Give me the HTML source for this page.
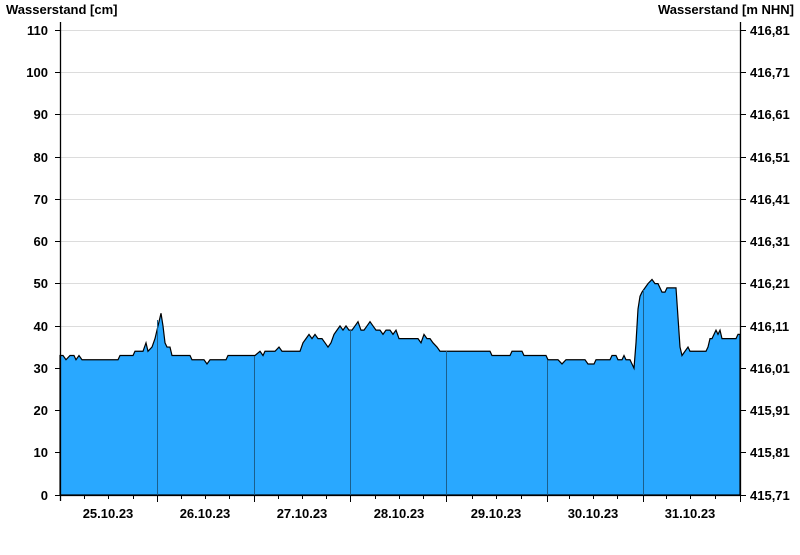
<!DOCTYPE html><html><head><style>body{margin:0;background:#fff;width:800px;height:550px;overflow:hidden}svg text{font-family:"Liberation Sans",Arial,sans-serif;font-weight:bold;font-size:13px;fill:#000}</style></head><body>
<svg width="800" height="550" viewBox="0 0 800 550">
<text x="6" y="14">Wasserstand [cm]</text>
<text x="794" y="14" text-anchor="end">Wasserstand [m NHN]</text>
<g stroke="#dcdcdc" stroke-width="1">
<line x1="60" x2="740" y1="30.5" y2="30.5"/><line x1="60" x2="740" y1="72.5" y2="72.5"/><line x1="60" x2="740" y1="114.5" y2="114.5"/><line x1="60" x2="740" y1="157.5" y2="157.5"/><line x1="60" x2="740" y1="199.5" y2="199.5"/><line x1="60" x2="740" y1="241.5" y2="241.5"/><line x1="60" x2="740" y1="283.5" y2="283.5"/><line x1="60" x2="740" y1="326.5" y2="326.5"/><line x1="60" x2="740" y1="368.5" y2="368.5"/><line x1="60" x2="740" y1="410.5" y2="410.5"/><line x1="60" x2="740" y1="452.5" y2="452.5"/>
</g>
<g transform="translate(0,495) scale(1,-4.227)">
<polygon fill="#29a8ff" stroke="#000" stroke-width="1.2" vector-effect="non-scaling-stroke" points="60,0 60,33 63,33 66,32 70,33 74,33 76,32 79,33 82,32 84,32 118,32 120,33 133,33 135,34 143,34 146,36 148,34 152,35 155,37 158,40 161,43 163,40 165,36 167,35 170,35 172,33 190,33 192,32 204,32 207,31 210,32 226,32 228,33 255,33 260,34 263,33 265,34 275,34 279,35 282,34 300,34 303,36 306,37 309,38 312,37 315,38 318,37 322,37 325,36 328,35 331,36 334,38 337,39 340,40 343,39 346,40 349,39 352,39 355,40 358,41 361,39 364,39 367,40 370,41 373,40 376,39 380,39 383,38 386,39 390,39 393,38 396,39 399,37 418,37 421,36 424,38 427,37 430,37 433,36 437,35 440,34 490,34 492,33 510,33 512,34 522,34 524,33 546,33 548,32 558,32 562,31 566,32 585,32 588,31 594,31 596,32 610,32 612,33 616,33 618,32 622,32 624,33 626,32 630,32 632,31 634,30 636,36 638,44 640,47 642,48 645,49 648,50 652,51 655,50 658,50 660,49 662,48 665,48 667,49 676,49 678,42 680,35 682,33 685,34 688,35 690,34 706,34 708,35 710,37 712,37 714,38 716,39 718,38 720,39 722,37 736,37 738,38 740,38 740,0"/>
</g>
<g stroke="#1b5f8c" stroke-width="1">
<line x1="157.5" x2="157.5" y1="320" y2="495"/><line x1="254.5" x2="254.5" y1="356" y2="495"/><line x1="350.5" x2="350.5" y1="330" y2="495"/><line x1="446.5" x2="446.5" y1="351" y2="495"/><line x1="547.5" x2="547.5" y1="360" y2="495"/><line x1="643.5" x2="643.5" y1="290" y2="495"/>
</g>
<g stroke="#000" stroke-width="1.3">
<line x1="60.5" x2="60.5" y1="22" y2="501"/><line x1="740.5" x2="740.5" y1="22" y2="495"/><line x1="60" x2="740" y1="495.5" y2="495.5"/>
</g>
<g stroke="#000" stroke-width="1">
<line x1="55" x2="60" y1="30.5" y2="30.5"/><line x1="55" x2="60" y1="72.5" y2="72.5"/><line x1="55" x2="60" y1="114.5" y2="114.5"/><line x1="55" x2="60" y1="157.5" y2="157.5"/><line x1="55" x2="60" y1="199.5" y2="199.5"/><line x1="55" x2="60" y1="241.5" y2="241.5"/><line x1="55" x2="60" y1="283.5" y2="283.5"/><line x1="55" x2="60" y1="326.5" y2="326.5"/><line x1="55" x2="60" y1="368.5" y2="368.5"/><line x1="55" x2="60" y1="410.5" y2="410.5"/><line x1="55" x2="60" y1="452.5" y2="452.5"/><line x1="55" x2="60" y1="495.5" y2="495.5"/>
<line x1="741" x2="746" y1="30.5" y2="30.5"/><line x1="741" x2="746" y1="72.5" y2="72.5"/><line x1="741" x2="746" y1="114.5" y2="114.5"/><line x1="741" x2="746" y1="157.5" y2="157.5"/><line x1="741" x2="746" y1="199.5" y2="199.5"/><line x1="741" x2="746" y1="241.5" y2="241.5"/><line x1="741" x2="746" y1="283.5" y2="283.5"/><line x1="741" x2="746" y1="326.5" y2="326.5"/><line x1="741" x2="746" y1="368.5" y2="368.5"/><line x1="741" x2="746" y1="410.5" y2="410.5"/><line x1="741" x2="746" y1="452.5" y2="452.5"/><line x1="741" x2="746" y1="495.5" y2="495.5"/>
<line x1="157.5" x2="157.5" y1="495" y2="502"/><line x1="254.5" x2="254.5" y1="495" y2="502"/><line x1="350.5" x2="350.5" y1="495" y2="502"/><line x1="446.5" x2="446.5" y1="495" y2="502"/><line x1="547.5" x2="547.5" y1="495" y2="502"/><line x1="643.5" x2="643.5" y1="495" y2="502"/><line x1="740.5" x2="740.5" y1="495" y2="502"/>
<line x1="84.5" x2="84.5" y1="495" y2="499"/><line x1="108.5" x2="108.5" y1="495" y2="499"/><line x1="133.5" x2="133.5" y1="495" y2="499"/>
<line x1="181.5" x2="181.5" y1="495" y2="499"/><line x1="205.5" x2="205.5" y1="495" y2="499"/><line x1="229.5" x2="229.5" y1="495" y2="499"/>
<line x1="278.5" x2="278.5" y1="495" y2="499"/><line x1="302.5" x2="302.5" y1="495" y2="499"/><line x1="326.5" x2="326.5" y1="495" y2="499"/>
<line x1="375.5" x2="375.5" y1="495" y2="499"/><line x1="399.5" x2="399.5" y1="495" y2="499"/><line x1="423.5" x2="423.5" y1="495" y2="499"/>
<line x1="472.5" x2="472.5" y1="495" y2="499"/><line x1="496.5" x2="496.5" y1="495" y2="499"/><line x1="521.5" x2="521.5" y1="495" y2="499"/>
<line x1="569.5" x2="569.5" y1="495" y2="499"/><line x1="593.5" x2="593.5" y1="495" y2="499"/><line x1="617.5" x2="617.5" y1="495" y2="499"/>
<line x1="666.5" x2="666.5" y1="495" y2="499"/><line x1="690.5" x2="690.5" y1="495" y2="499"/><line x1="715.5" x2="715.5" y1="495" y2="499"/>
</g>
<g text-anchor="end">
<text x="48" y="35">110</text><text x="48" y="77">100</text><text x="48" y="119">90</text><text x="48" y="162">80</text><text x="48" y="204">70</text><text x="48" y="246">60</text><text x="48" y="288">50</text><text x="48" y="331">40</text><text x="48" y="373">30</text><text x="48" y="415">20</text><text x="48" y="457">10</text><text x="48" y="500">0</text>
</g>
<g>
<text x="750" y="35">416,81</text><text x="750" y="77">416,71</text><text x="750" y="119">416,61</text><text x="750" y="162">416,51</text><text x="750" y="204">416,41</text><text x="750" y="246">416,31</text><text x="750" y="288">416,21</text><text x="750" y="331">416,11</text><text x="750" y="373">416,01</text><text x="750" y="415">415,91</text><text x="750" y="457">415,81</text><text x="750" y="500">415,71</text>
</g>
<g text-anchor="middle">
<text x="108" y="518">25.10.23</text><text x="205" y="518">26.10.23</text><text x="302" y="518">27.10.23</text><text x="399" y="518">28.10.23</text><text x="496" y="518">29.10.23</text><text x="593" y="518">30.10.23</text><text x="690" y="518">31.10.23</text>
</g>
</svg></body></html>
